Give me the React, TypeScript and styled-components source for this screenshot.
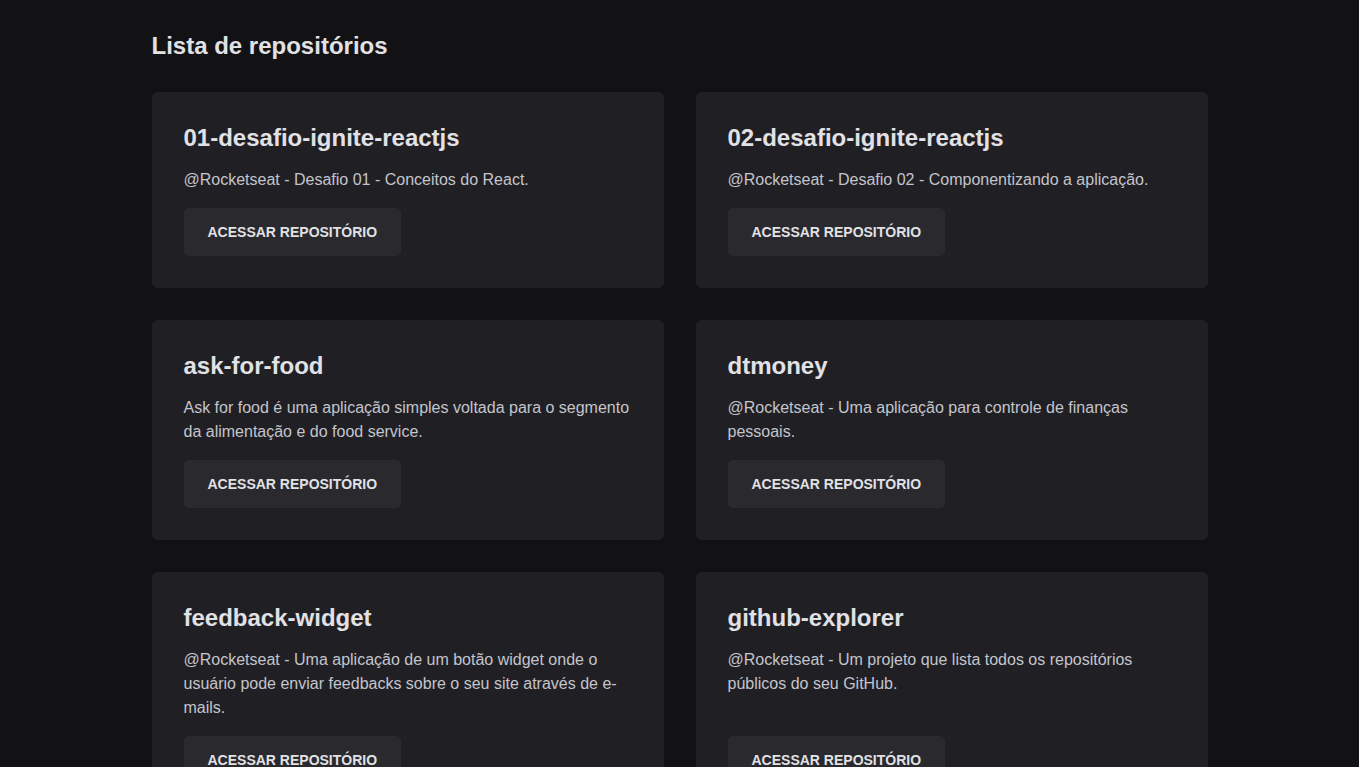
import React from "react";
import styled, { createGlobalStyle } from "styled-components";

const GlobalStyle = createGlobalStyle`
  * { box-sizing: border-box; margin: 0; padding: 0; }
  body {
    background: #121214;
    color: #e1e1e6;
    font-family: "Liberation Sans", Arial, sans-serif;
    -webkit-font-smoothing: antialiased;
  }
`;

const Page = styled.main`
  max-width: 1056px;
  margin: 0 auto;
  padding: 32px 0;
`;

const Heading = styled.h2`
  font-size: 24px;
  font-weight: 700;
  color: #e1e1e6;
  margin-bottom: 32px;
`;

const Grid = styled.ul`
  list-style: none;
  display: grid;
  grid-template-columns: repeat(2, 1fr);
  gap: 32px;
`;

const Card = styled.li`
  background: #202024;
  border-radius: 6px;
  padding: 32px;
  display: flex;
  flex-direction: column;
`;

const Title = styled.strong`
  display: block;
  font-size: 24px;
  font-weight: 700;
  color: #e1e1e6;
`;

const Description = styled.p`
  margin-top: 16px;
  font-size: 16px;
  line-height: 24px;
  color: #c4c4cc;
`;

const Button = styled.a`
  margin-top: auto;
  align-self: flex-start;
  display: inline-flex;
  align-items: center;
  justify-content: center;
  height: 48px;
  padding: 0 24px;
  background: #29292e;
  border-radius: 5px;
  color: #e1e1e6;
  font-size: 14px;
  font-weight: 700;
  text-transform: uppercase;
  text-decoration: none;
`;

const ButtonWrap = styled.div`
  margin-top: auto;
  padding-top: 16px;
`;

const repos = [
  { name: "01-desafio-ignite-reactjs", desc: "@Rocketseat - Desafio 01 - Conceitos do React." },
  { name: "02-desafio-ignite-reactjs", desc: "@Rocketseat - Desafio 02 - Componentizando a aplicação." },
  { name: "ask-for-food", desc: "Ask for food é uma aplicação simples voltada para o segmento da alimentação e do food service." },
  { name: "dtmoney", desc: "@Rocketseat - Uma aplicação para controle de finanças pessoais." },
  { name: "feedback-widget", desc: "@Rocketseat - Uma aplicação de um botão widget onde o usuário pode enviar feedbacks sobre o seu site através de e-mails." },
  { name: "github-explorer", desc: "@Rocketseat - Um projeto que lista todos os repositórios públicos do seu GitHub." },
];

export default function App() {
  return (
    <>
      <GlobalStyle />
      <Page>
        <Heading>Lista de repositórios</Heading>
        <Grid>
          {repos.map((r) => (
            <Card key={r.name}>
              <Title>{r.name}</Title>
              <Description>{r.desc}</Description>
              <ButtonWrap>
                <Button href="#">Acessar repositório</Button>
              </ButtonWrap>
            </Card>
          ))}
        </Grid>
      </Page>
    </>
  );
}
